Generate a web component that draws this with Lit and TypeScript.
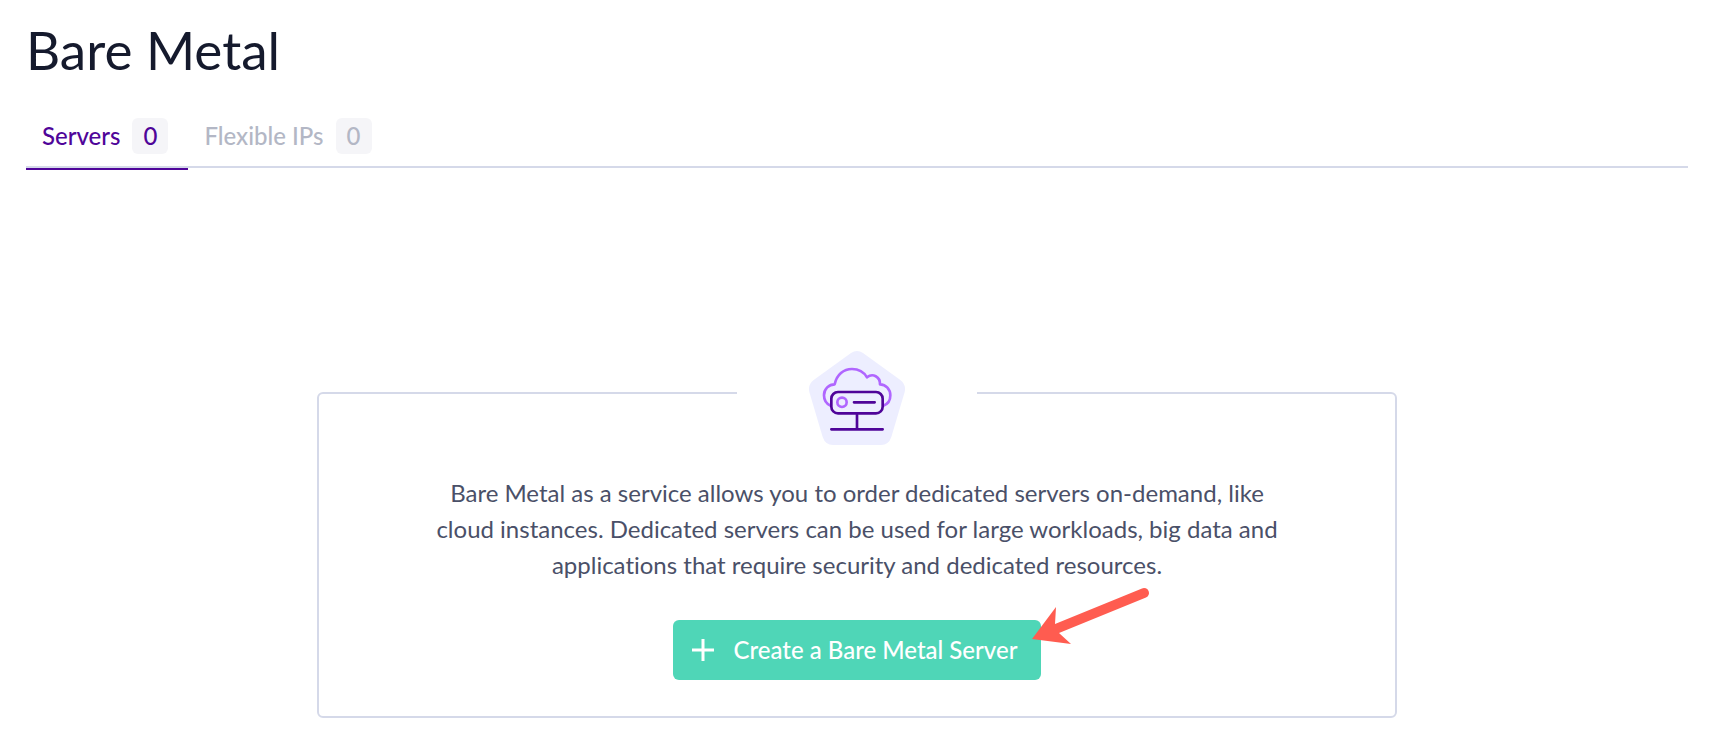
import { LitElement, html, css, svg } from "lit";
import { customElement, state } from "lit/decorators.js";

interface Tab {
  id: string;
  label: string;
  count: number;
}

const TABS: Tab[] = [
  { id: "servers", label: "Servers", count: 0 },
  { id: "ips", label: "Flexible IPs", count: 0 },
];

const serverIcon = html`<svg class="picture" viewBox="54 47 288 288" aria-hidden="true">
  <path
    fill="#edeeff"
    d="M180 53Q198 41 216 53L328 134Q346 148 341 170L301 305Q293 329 270 329H126Q103 329 95 305L55 170Q50 148 68 134Z"
  />
  <g fill="none" stroke-width="8" stroke-linecap="round" stroke-linejoin="round">
    <g stroke="#b066ff">
      <path
        d="M119 211C106 206 99 194 99 180C99 160 114 147 131 147C137 118 158 101 183 101C203 101 219 111 228 126C245 112 268 124 267 147C285 147 298 163 298 180C298 196 290 207 277 211"
      />
      <circle cx="153" cy="201" r="14" />
    </g>
    <g stroke="#4f0599">
      <rect x="121" y="170" width="154" height="64" rx="20" />
      <path d="M189 201H251M198 238V280M121 282H275" />
    </g>
  </g>
</svg>`;

const arrow = html`<svg class="arrow" viewBox="0 0 122 64" aria-hidden="true">
  ${svg`<path fill="#ff5c50" d="M3 54L27 22L26 39L113 3.400A5 5 0 0 1 117 12.600L30 48L42 59Z"/>`}
</svg>`;

@customElement("app-root")
export class AppRoot extends LitElement {
  static styles = css`
    :host {
      display: block;
      box-sizing: border-box;
      padding: 20px 38px 32px 26px;
      background: #fff;
      color: #151a2d;
      font-family: Lato, "Noto Sans", sans-serif;
      font-size: 24px;
      font-variant-ligatures: none;
      line-height: 36px;
    }
    .title {
      margin: 0;
      font-size: 53px;
      font-weight: 400;
      line-height: 60px;
    }
    .tabs {
      display: flex;
      margin-top: 26px;
      box-shadow: inset 0 -2px #d5d9e9;
      height: 62px;
    }
    .tab {
      display: flex;
      align-items: center;
      gap: 12px;
      padding: 0 20px 2px 16px;
      border: 0;
      background: none;
      color: #b3b7c5;
      font: inherit;
      font-weight: 500;
      cursor: pointer;
    }
    .tab[aria-selected="true"] {
      color: #4f0599;
      box-shadow: 0 2px #4f0599;
    }
    .count {
      box-sizing: border-box;
      min-width: 36px;
      padding: 0 11px;
      border-radius: 6px;
      background: #f5f5f8;
    }
    .empty {
      position: relative;
      box-sizing: border-box;
      display: flex;
      flex-direction: column;
      align-items: center;
      max-width: 1080px;
      margin: 224px auto 0;
      padding: 0 36px 36px;
      border: 2px solid #d5d9e9;
      border-radius: 6px;
    }
    .emblem {
      display: flex;
      justify-content: center;
      width: 240px;
      max-width: 80%;
      margin-top: -43px;
      background: #fff;
    }
    .picture {
      width: 96px;
      height: 96px;
    }
    .text {
      max-width: 864px;
      margin: 28px 0 37px;
      color: #4a5068;
      text-align: center;
    }
    .action {
      position: relative;
    }
    .create {
      display: flex;
      align-items: center;
      gap: 19px;
      height: 60px;
      padding: 0 24px 0 18px;
      border: 0;
      border-radius: 6px;
      background: #4fd6b7;
      color: #fff;
      font: inherit;
      font-weight: 500;
      cursor: pointer;
    }
    .plus {
      width: 24px;
      height: 24px;
    }
    .arrow {
      position: absolute;
      top: -35px;
      right: -110px;
      width: 122px;
      height: 64px;
      pointer-events: none;
    }
  `;

  @state() private selected = "servers";

  render() {
    return html`
      <h1 class="title">Bare Metal</h1>
      <div class="tabs" role="tablist">
        ${TABS.map(
          (tab) => html`<button
            class="tab"
            role="tab"
            aria-selected=${this.selected === tab.id ? "true" : "false"}
            @click=${() => (this.selected = tab.id)}
          >
            <span>${tab.label}</span><span class="count">${tab.count}</span>
          </button>`
        )}
      </div>
      <section class="empty">
        <div class="emblem">${serverIcon}</div>
        <p class="text">
          Bare Metal as a service allows you to order dedicated servers on-demand, like cloud
          instances. Dedicated servers can be used for large workloads, big data and applications
          that require security and dedicated resources.
        </p>
        <div class="action">
          <button class="create">
            <svg class="plus" viewBox="0 0 24 24" aria-hidden="true">
              <path d="M12 1V23M1 12H23" stroke="currentColor" stroke-width="3" />
            </svg>
            <span>Create a Bare Metal Server</span>
          </button>
          ${arrow}
        </div>
      </section>
    `;
  }
}
